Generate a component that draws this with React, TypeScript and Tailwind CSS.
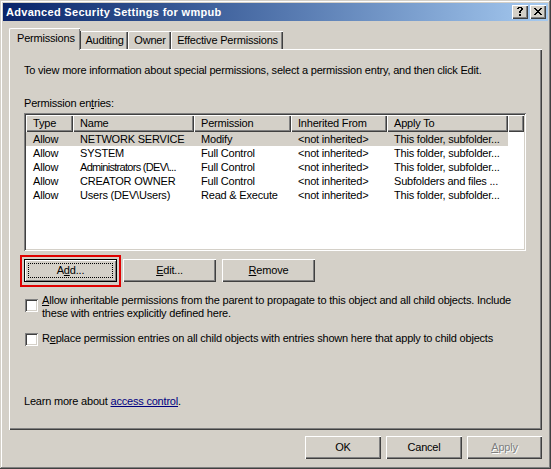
import React from 'react';

const raised = 'shadow-[inset_1px_1px_#ffffff,inset_-1px_-1px_#404040,inset_-2px_-2px_#808080]';
const sunken = 'shadow-[inset_1px_1px_#808080,inset_-1px_-1px_#ffffff,inset_2px_2px_#404040,inset_-2px_-2px_#d4d0c8]';

const columns = [
  { label: 'Type', w: 'w-[47px]' },
  { label: 'Name', w: 'w-[121px]' },
  { label: 'Permission', w: 'w-[97px]' },
  { label: 'Inherited From', w: 'w-[96px]' },
  { label: 'Apply To', w: 'w-[121px]' },
];

const entries = [
  ['Allow', 'NETWORK SERVICE', 'Modify', '<not inherited>', 'This folder, subfolder...'],
  ['Allow', 'SYSTEM', 'Full Control', '<not inherited>', 'This folder, subfolder...'],
  ['Allow', 'Administrators (DEV\\...', 'Full Control', '<not inherited>', 'This folder, subfolder...'],
  ['Allow', 'CREATOR OWNER', 'Full Control', '<not inherited>', 'Subfolders and files ...'],
  ['Allow', 'Users (DEV\\Users)', 'Read & Execute', '<not inherited>', 'This folder, subfolder...'],
];

function HelpGlyph() {
  const rows = [' #### ', '##  ##', '    ##', '   ## ', '  ##  ', '  ##  ', '      ', '  ##  ', '  ##  '];
  return (
    <svg width="6" height="9" viewBox="0 0 6 9" shapeRendering="crispEdges">
      {rows.flatMap((r, y) =>
        r.split('').map((c, x) => (c === '#' ? <rect key={`${x}-${y}`} x={x} y={y} width="1" height="1" fill="#000" /> : null))
      )}
    </svg>
  );
}

function CloseGlyph() {
  const rows = ['##    ##', ' ##  ## ', '  ####  ', '   ##   ', '  ####  ', ' ##  ## ', '##    ##'];
  return (
    <svg width="8" height="7" viewBox="0 0 8 7" shapeRendering="crispEdges">
      {rows.flatMap((r, y) =>
        r.split('').map((c, x) => (c === '#' ? <rect key={`${x}-${y}`} x={x} y={y} width="1" height="1" fill="#000" /> : null))
      )}
    </svg>
  );
}

function Button({ children, className = '' }: { children: React.ReactNode; className?: string }) {
  return (
    <div className={`h-[23px] flex items-center justify-center bg-[#d4d0c8] ${raised} ${className}`}>
      {children}
    </div>
  );
}

function Checkbox() {
  return <div className={`w-[13px] h-[13px] shrink-0 bg-white ${sunken}`} />;
}

function Tab({ label, selected, w }: { label: string; selected?: boolean; w: string }) {
  if (selected) {
    return (
      <div className={`${w} h-[22px] -mb-px relative z-10 bg-[#d4d0c8] border-l border-t border-white rounded-tl-[2px] shadow-[inset_-1px_0_#808080] pt-[3px] pl-[7px] leading-[13px]`}>
        <div className="absolute right-[-1px] top-[2px] bottom-[1px] w-px bg-[#404040]" />
        {label}
      </div>
    );
  }
  return (
    <div className={`${w} h-[18px] relative border-l border-t border-white rounded-tl-[2px] shadow-[inset_-1px_0_#404040,inset_-2px_0_#808080] flex justify-center pt-[2px] leading-[13px]`}>
      {label}
    </div>
  );
}

export default function App() {
  return (
    <div className="w-[551px] h-[469px] bg-[#d4d0c8] p-[3px] flex flex-col font-['Liberation_Sans',Arial,sans-serif] text-[11px] tracking-[-0.2px] text-black shadow-[inset_-1px_-1px_#404040,inset_1px_1px_#d4d0c8,inset_-2px_-2px_#808080,inset_2px_2px_#ffffff]">
      {/* title bar */}
      <div className="h-[18px] shrink-0 flex items-center bg-gradient-to-r from-[#0a246a] to-[#a6caf0] pl-[3px] pr-[2px]">
        <span className="flex-1 text-white font-bold text-[11px] leading-[18px] tracking-[0.3px]">Advanced Security Settings for wmpub</span>
        <div className={`w-[16px] h-[14px] bg-[#d4d0c8] ${raised} flex items-center justify-center pb-px`}>
          <HelpGlyph />
        </div>
        <div className={`w-[16px] h-[14px] ml-[2px] bg-[#d4d0c8] ${raised} flex items-center justify-center pb-px`}>
          <CloseGlyph />
        </div>
      </div>

      <div className="flex-1 flex flex-col px-[6px] pt-[7px]">
        {/* tabs */}
        <div className="h-[21px] flex items-end">
          <Tab label="Permissions" selected w="w-[71px]" />
          <Tab label="Auditing" w="w-[48px]" />
          <Tab label="Owner" w="w-[43px]" />
          <Tab label="Effective Permissions" w="w-[112px]" />
        </div>

        {/* tab panel */}
        <div className="h-[381px] shrink-0 flex flex-col pt-[15px] pl-[15px] pr-[16px] shadow-[inset_1px_1px_#ffffff,inset_-1px_-1px_#404040,inset_-2px_-2px_#808080]">
          <p className="leading-[13px] whitespace-nowrap">
            To view more information about special permissions, select a permission entry, and then click Edit.
          </p>
          <p className="leading-[13px] mt-[20px]">
            Permission en<span className="underline">t</span>ries:
          </p>

          {/* list view */}
          <div className={`mt-[3px] h-[138px] bg-white p-[2px] flex flex-col ${sunken}`}>
            <div className="flex h-[17px] shrink-0 bg-[#d4d0c8]">
              {columns.map((c) => (
                <div key={c.label} className={`${c.w} shrink-0 pl-[7px] leading-[17px] whitespace-nowrap ${raised}`}>
                  {c.label}
                </div>
              ))}
              <div className={`flex-1 ${raised}`} />
            </div>
            {entries.map((row, i) => (
              <div key={i} className={`flex h-[14px] w-[482px] ${i === 0 ? 'bg-[#d4d0c8]' : ''}`}>
                {row.map((cell, j) => (
                  <div
                    key={j}
                    className={`${columns[j].w} shrink-0 pl-[7px] leading-[14px] whitespace-nowrap ${cell.startsWith('Administrators') ? 'tracking-[-0.7px]' : ''}`}
                  >
                    {cell}
                  </div>
                ))}
              </div>
            ))}
          </div>

          {/* action buttons */}
          <div className="mt-[8px] flex gap-[6px]">
            <div className="relative">
              <div className="absolute left-[-4px] top-[-4px] right-[-4px] bottom-[-5px] border-2 border-[#e00000]" />
              <div className="w-[93px] h-[23px] border border-black bg-[#d4d0c8] relative flex items-center justify-center shadow-[inset_1px_1px_#ffffff,inset_-1px_-1px_#808080]">
                <div className="absolute inset-[3px] border border-dotted border-black" />
                <span>A<span className="underline">d</span>d...</span>
              </div>
            </div>
            <Button className="w-[93px]">
              <span><span className="underline">E</span>dit...</span>
            </Button>
            <Button className="w-[93px]">
              <span><span className="underline">R</span>emove</span>
            </Button>
          </div>

          {/* checkboxes */}
          <div className="mt-[12px] flex gap-[4px] pl-px">
            <div className="pt-[5px]"><Checkbox /></div>
            <p className="leading-[13px] whitespace-nowrap">
              <span className="underline">A</span>llow inheritable permissions from the parent to propagate to this object and all child objects. Include
              <br />
              these with entries explicitly defined here.
            </p>
          </div>
          <div className="mt-[12px] flex gap-[4px] pl-px">
            <div className="pt-px"><Checkbox /></div>
            <p className="leading-[13px] whitespace-nowrap">
              R<span className="underline">e</span>place permission entries on all child objects with entries shown here that apply to child objects
            </p>
          </div>

          <p className="mt-[49px] leading-[13px]">
            Learn more about <span className="text-[#000080] underline">access control</span>.
          </p>
        </div>

        {/* dialog buttons */}
        <div className="mt-[6px] flex justify-end gap-[5px]">
          <Button className="w-[76px]">OK</Button>
          <Button className="w-[76px]">Cancel</Button>
          <Button className="w-[75px]">
            <span className="text-[#808080] [text-shadow:1px_1px_0_#ffffff]"><span className="underline">A</span>pply</span>
          </Button>
        </div>
      </div>
    </div>
  );
}
